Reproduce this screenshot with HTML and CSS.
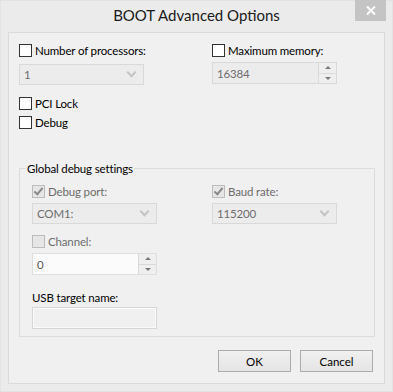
FILE: index.html
```html
<!DOCTYPE html>
<html lang="en">
<head>
  <meta charset="UTF-8">
  <title>BOOT Advanced Options</title>
  <link rel="stylesheet" href="styles.css">
</head>
<body>
  <div class="window">
    <div class="titlebar">
      <span class="title">BOOT Advanced Options</span>
      <button class="close" type="button">
        <svg width="10" height="9" viewBox="0 0 10 9"><path d="M1 0.5L9 8.5M9 0.5L1 8.5" stroke="#fff" stroke-width="2"/></svg>
      </button>
    </div>

    <div class="client">
      <div class="two-col top">
        <div class="field">
          <label class="check"><span class="box"></span>Number of processors:</label>
          <div class="combo disabled"><span>1</span><span class="chev"></span></div>
        </div>
        <div class="field">
          <label class="check"><span class="box"></span>Maximum memory:</label>
          <div class="spin disabled">
            <span class="value">16384</span>
            <span class="arrows"><span class="up"></span><span class="down"></span></span>
          </div>
        </div>
      </div>

      <div class="options">
        <label class="check"><span class="box"></span>PCI Lock</label>
        <label class="check"><span class="box"></span>Debug</label>
      </div>

      <fieldset class="group">
        <legend>Global debug settings</legend>
        <div class="two-col inner">
          <div class="field">
            <label class="check off"><span class="box checked"></span>Debug port:</label>
            <div class="combo disabled"><span>COM1:</span><span class="chev"></span></div>
          </div>
          <div class="field">
            <label class="check off"><span class="box checked"></span>Baud rate:</label>
            <div class="combo disabled"><span>115200</span><span class="chev"></span></div>
          </div>
        </div>
        <div class="field channel">
          <label class="check off"><span class="box"></span>Channel:</label>
          <div class="spin light">
            <span class="value">0</span>
            <span class="arrows"><span class="up"></span><span class="down"></span></span>
          </div>
        </div>
        <div class="field usb">
          <span class="label">USB target name:</span>
          <div class="textbox"></div>
        </div>
      </fieldset>

      <div class="buttons">
        <button type="button" class="btn">OK</button>
        <button type="button" class="btn">Cancel</button>
      </div>
    </div>
  </div>
</body>
</html>
```

FILE: styles.css
```css
body {
  margin: 0;
  font-family: Lato, "Noto Sans", sans-serif;
  font-size: 11.5px;
  letter-spacing: -0.15px;
  color: #000;
}
.window {
  width: 393px;
  height: 392px;
  box-sizing: border-box;
  background: #ebebeb;
  border: 1px solid #e3e3e3;
  display: flex;
  flex-direction: column;
}
.titlebar {
  position: relative;
  height: 31px;
  display: flex;
  align-items: center;
  justify-content: center;
}
.title {
  font-size: 15px;
  letter-spacing: 0;
  color: #1a1a1a;
  margin-top: -3px;
}
.close {
  position: absolute;
  top: -1px;
  right: 6px;
  width: 31px;
  height: 21px;
  border: 0;
  padding: 0;
  background: #c4c4c4;
  display: flex;
  align-items: center;
  justify-content: center;
}
.client {
  margin: 0 7px 7px 7px;
  flex: 1;
  background: #f0f0f0;
  border: 1px solid #dadada;
  padding: 10px 11px 0 10px;
  display: flex;
  flex-direction: column;
}
.two-col {
  display: grid;
  grid-template-columns: 193px 1fr;
}
.field {
  display: flex;
  flex-direction: column;
}
.check {
  display: flex;
  align-items: center;
  height: 15px;
  line-height: 15px;
}
.check.off {
  color: #6d6d6d;
}
.box {
  width: 11px;
  height: 11px;
  border: 1px solid #333;
  background: #fff;
  margin-right: 3px;
  position: relative;
}
.check.off .box {
  border-color: #bcbcbc;
  background: #e6e6e6;
}
.box.checked::after {
  content: "";
  position: absolute;
  left: 3px;
  top: 0px;
  width: 3px;
  height: 7px;
  border: solid #8a8a8a;
  border-width: 0 2px 2px 0;
  transform: rotate(40deg);
}
.combo {
  margin-top: 6px;
  width: 125px;
  height: 21px;
  box-sizing: border-box;
  border: 1px solid #d9d9d9;
  background: #ececec;
  color: #6d6d6d;
  display: flex;
  align-items: center;
  justify-content: space-between;
  padding: 0 5px 0 4px;
}
.inner .combo {
  margin-top: 4px;
}
.chev {
  width: 5px;
  height: 5px;
  border: solid #c4c4c4;
  border-width: 0 2px 2px 0;
  transform: rotate(45deg);
  margin: -4px 3px 0 0;
}
.spin {
  margin-top: 4px;
  width: 125px;
  height: 22px;
  box-sizing: border-box;
  border: 1px solid #d9d9d9;
  background: #ececec;
  color: #6d6d6d;
  display: flex;
  align-items: stretch;
}
.spin.light {
  background: #fbfbfb;
  border-color: #dedede;
  color: #555;
}
.spin .value {
  flex: 1;
  display: flex;
  align-items: center;
  padding-left: 4px;
}
.arrows {
  width: 17px;
  display: flex;
  flex-direction: column;
  border-left: 1px solid #d9d9d9;
}
.arrows span {
  flex: 1;
  display: flex;
  align-items: center;
  justify-content: center;
  background: #efefef;
}
.arrows .up {
  border-bottom: 1px solid #d9d9d9;
}
.arrows .up::after {
  content: "";
  border: 3px solid transparent;
  border-bottom: 3px solid #7a7a7a;
  border-top: 0;
}
.arrows .down::after {
  content: "";
  border: 3px solid transparent;
  border-top: 3px solid #7a7a7a;
  border-bottom: 0;
}
.options {
  margin-top: 11px;
  display: flex;
  flex-direction: column;
  gap: 4px;
}
.group {
  margin: 31px 0 0 0;
  width: 356px;
  height: 176px;
  box-sizing: border-box;
  border: 1px solid #dcdcdc;
  padding: 8px 12px 0 12px;
}
.group legend {
  padding: 0 2px;
  margin-left: -7px;
  line-height: 15px;
}
.inner {
  grid-template-columns: 180px 1fr;
}
.channel {
  margin-top: 10px;
}
.channel .spin {
  margin-top: 4px;
}
.usb {
  margin-top: 15px;
}
.label {
  line-height: 15px;
}
.textbox {
  margin-top: 2px;
  width: 125px;
  height: 22px;
  box-sizing: border-box;
  border: 1px solid #d6d6d6;
  box-shadow: inset 0 0 0 1px #fafafa;
  background: #f0f0f0;
}
.buttons {
  margin-top: auto;
  margin-bottom: 11px;
  display: flex;
  justify-content: flex-end;
  gap: 9px;
}
.btn {
  width: 73px;
  height: 22px;
  font: inherit;
  color: #000;
  border: 1px solid #acacac;
  background: linear-gradient(#f0f0f0, #e5e5e5);
  padding: 0;
}
```
